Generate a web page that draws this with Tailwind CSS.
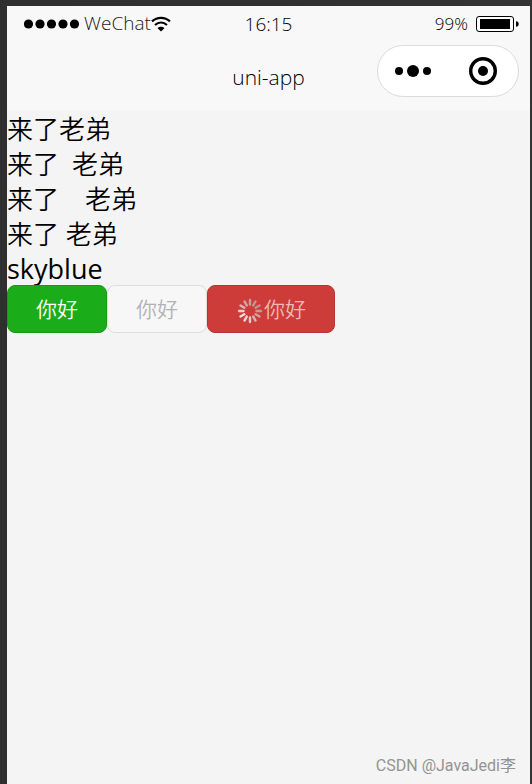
<!DOCTYPE html>
<html lang="zh-CN">
<head>
  <meta charset="UTF-8" />
  <meta name="viewport" content="width=device-width, initial-scale=1.0"/>
  <title>uni-app</title>
  <script src="https://cdn.jsdelivr.net/npm/@tailwindcss/browser@4"></script>
</head>
<body class="bg-[#2f2f2f] font-['Open_Sans','Noto_Sans_CJK_SC',sans-serif] text-black">
  <div class="min-h-screen flex flex-col pt-1.5 pr-0.5 pl-[7px] bg-linear-to-r from-[#2f2f2f] to-[#333333]">
    <div class="flex-1 flex flex-col bg-[#f4f4f4]">

      <header class="h-[104px] bg-[#f8f8f8]">
        <!-- status bar -->
        <div class="h-9 grid grid-cols-[1fr_auto_1fr] items-center px-[11px]">
          <div class="flex items-center pl-1.5">
            <svg class="w-14 h-3 shrink-0" viewBox="0 0 56 12">
              <circle cx="4.5" cy="6" r="4.6"/>
              <circle cx="16" cy="6" r="4.6"/>
              <circle cx="27.5" cy="6" r="4.6"/>
              <circle cx="39" cy="6" r="4.6"/>
              <circle cx="50.5" cy="6" r="4.6"/>
            </svg>
            <span class="ml-1 pb-0.5 text-[19px] leading-6 text-[#1a1a1a] font-[350]">WeChat</span>
            <svg class="w-5 h-4 shrink-0" viewBox="0 0 20 16" fill="none" stroke="#000" stroke-width="2.2">
              <path d="M1 5.4C6.2 0.6 13.8 0.6 19 5.4"/>
              <path d="M4 9C7.6 5.8 12.4 5.8 16 9"/>
              <path d="M6.6 12.2C8.4 10.4 11.6 10.4 13.4 12.2L10 15.4Z" fill="#000" stroke="none"/>
            </svg>
          </div>
          <span class="text-[19px] leading-6 font-[350]">16:15</span>
          <div class="flex items-center justify-end gap-2">
            <span class="text-[17px] leading-6 font-light">99%</span>
            <svg class="w-[43px] h-4" viewBox="0 0 43 16">
              <rect x="0.5" y="0.5" width="37" height="15" rx="2.5" fill="#fff" stroke="#000"/>
              <rect x="4" y="3" width="30" height="10"/>
              <path d="M40 5.2C43.6 5.2 43.6 10.8 40 10.8Z"/>
            </svg>
          </div>
        </div>

        <!-- navigation bar -->
        <div class="h-[68px] grid grid-cols-[1fr_auto_1fr] items-start pt-[3px] px-[11px]">
          <h1 class="col-start-2 pt-[18px] text-[21px] leading-7 font-[350]">uni-app</h1>
          <div class="w-[142px] h-[52px] justify-self-end flex rounded-full border border-[#dcdcdc] bg-white">
            <button class="flex-1 flex items-center justify-center" aria-label="更多">
              <svg class="w-9 h-3" viewBox="0 0 36 12">
                <circle cx="4" cy="6" r="4"/>
                <circle cx="18" cy="6" r="6"/>
                <circle cx="32" cy="6" r="4"/>
              </svg>
            </button>
            <button class="flex-1 flex items-center justify-center" aria-label="关闭">
              <svg class="size-7" viewBox="0 0 28 28">
                <circle cx="14" cy="14" r="12.3" fill="none" stroke="#000" stroke-width="3.4"/>
                <circle cx="14" cy="14" r="5"/>
              </svg>
            </button>
          </div>
        </div>
      </header>

      <main class="flex-1">
        <div class="pt-0.5 text-[26px] leading-[35px] font-[350]">
          <div>来了老弟</div>
          <div>来了&ensp;老弟</div>
          <div>来了&emsp;老弟</div>
          <div>来了&nbsp;老弟</div>
        </div>
        <div class="text-[27px] leading-[33px]">skyblue</div>

        <div class="flex items-start text-[21px] leading-[35px] font-[350]">
          <button class="h-12 px-7 rounded-lg border border-[#189a18] bg-[#1aad19] text-white">你好</button>
          <button class="h-12 px-7 rounded-lg border border-[#dddddd] bg-[#f7f7f7] text-[#b2b2b2]" disabled>你好</button>
          <button class="h-12 px-7 flex items-center rounded-lg border border-[#b83533] bg-[#ce3c39] text-[#f0b9b8]">
            <svg class="w-7 h-7 mt-1" viewBox="-14 -14 28 28" stroke-width="2.4" stroke-linecap="round">
              <path d="M0 -6.5V-11" stroke="#bfa3a2"/>
              <path d="M0 -6.5V-11" stroke="#bb9694" transform="rotate(30)"/>
              <path d="M0 -6.5V-11" stroke="#bd9492" transform="rotate(60)"/>
              <path d="M0 -6.5V-11" stroke="#c39c9a" transform="rotate(90)"/>
              <path d="M0 -6.5V-11" stroke="#c9a5a3" transform="rotate(120)"/>
              <path d="M0 -6.5V-11" stroke="#d4b3b1" transform="rotate(150)"/>
              <path d="M0 -6.5V-11" stroke="#e2cac9" transform="rotate(180)"/>
              <path d="M0 -6.5V-11" stroke="#ead8d7" transform="rotate(210)"/>
              <path d="M0 -6.5V-11" stroke="#eee0df" transform="rotate(240)"/>
              <path d="M0 -6.5V-11" stroke="#e6d2d1" transform="rotate(270)"/>
              <path d="M0 -6.5V-11" stroke="#d2b6b5" transform="rotate(300)"/>
              <path d="M0 -6.5V-11" stroke="#c7a9a8" transform="rotate(330)"/>
            </svg>
            <span>你好</span>
          </button>
        </div>
      </main>

      <footer class="pr-3.5 pb-1.5 text-right text-base leading-6 text-[#939393] font-['Roboto','Noto_Sans_CJK_SC',sans-serif]">CSDN @JavaJedi李</footer>
    </div>
  </div>
</body>
</html>
